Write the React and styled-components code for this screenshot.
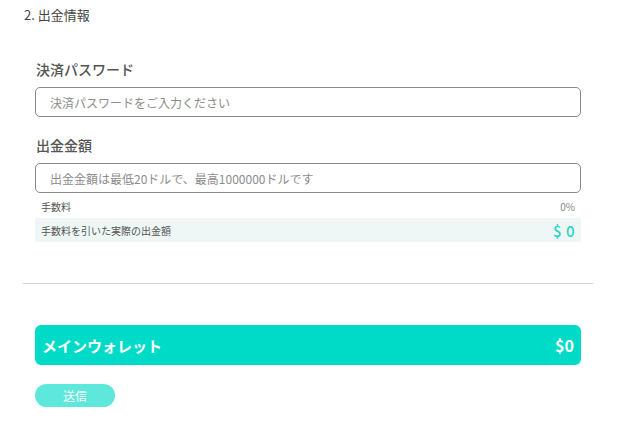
import React from "react";
import styled, { createGlobalStyle } from "styled-components";

const Global = createGlobalStyle`
  html, body { margin: 0; padding: 0; background: #fff; }
  body { font-family: "Noto Sans CJK JP", "Noto Sans", sans-serif; color: #444; }
  * { box-sizing: border-box; }
`;

const Page = styled.div`
  width: 622px;
  padding: 6px 29px 0 23px;
`;

const Title = styled.div`
  font-size: 13px;
  line-height: 18px;
  color: #444;
  padding-left: 1px;
`;

const Form = styled.div`
  padding: 35px 12px 0 12px;
  display: flex;
  flex-direction: column;
`;

const Label = styled.div`
  font-size: 14px;
  line-height: 20px;
  font-weight: 500;
  color: #555;
  padding-left: 1px;
  margin-bottom: ${(p) => p.$mb || 8}px;
`;

const Input = styled.input`
  width: 100%;
  height: 30px;
  border: 1px solid #8a8a8a;
  border-radius: 5px;
  padding: 0 14px;
  font-family: inherit;
  font-size: 12px;
  color: #444;
  outline: none;
  margin-bottom: ${(p) => p.$mb || 0}px;
  &::placeholder { color: #8c8c8c; }
`;

const InfoRow = styled.div`
  display: flex;
  justify-content: space-between;
  align-items: center;
  height: 24px;
  padding: 0 6px 0 6px;
  background: ${(p) => (p.$hl ? "#eef7f5" : "transparent")};
  font-size: 10px;
  color: #555;
`;

const Percent = styled.span`
  font-size: 10px;
  color: #888;
`;

const Amount = styled.span`
  font-size: 15px;
  color: #27d4c3;
  font-weight: 500;
  letter-spacing: 0.5px;
`;

const Divider = styled.hr`
  border: none;
  border-top: 1px solid #d4d4d4;
  margin: 41px 0 0 0;
  width: 570px;
`;

const Bottom = styled.div`
  padding: 41px 12px 0 12px;
  display: flex;
  flex-direction: column;
  align-items: flex-start;
`;

const Wallet = styled.div`
  width: 100%;
  height: 40px;
  border-radius: 6px;
  background: #00dbc8;
  color: #fff;
  display: flex;
  align-items: center;
  justify-content: space-between;
  padding: 0 7px;
  font-weight: 700;
  font-size: 15px;
`;

const WalletAmount = styled.span`
  font-size: 16px;
  font-weight: 700;
`;

const Submit = styled.button`
  margin-top: 19px;
  width: 80px;
  height: 23px;
  border: none;
  border-radius: 12px;
  background: #5ee8dc;
  color: #fff;
  font-family: inherit;
  font-size: 12px;
  padding: 0;
`;

export default function App() {
  return (
    <>
      <Global />
      <Page>
        <Title>2. 出金情報</Title>
        <Form>
          <Label>決済パスワード</Label>
          <Input type="password" placeholder="決済パスワードをご入力ください" $mb={18} />
          <Label>出金金額</Label>
          <Input placeholder="出金金額は最低20ドルで、最高1000000ドルです" $mb={1} />
          <InfoRow>
            <span>手数料</span>
            <Percent>0%</Percent>
          </InfoRow>
          <InfoRow $hl>
            <span>手数料を引いた実際の出金額</span>
            <Amount>$ 0</Amount>
          </InfoRow>
        </Form>
        <Divider />
        <Bottom>
          <Wallet>
            <span>メインウォレット</span>
            <WalletAmount>$0</WalletAmount>
          </Wallet>
          <Submit>送信</Submit>
        </Bottom>
      </Page>
    </>
  );
}
